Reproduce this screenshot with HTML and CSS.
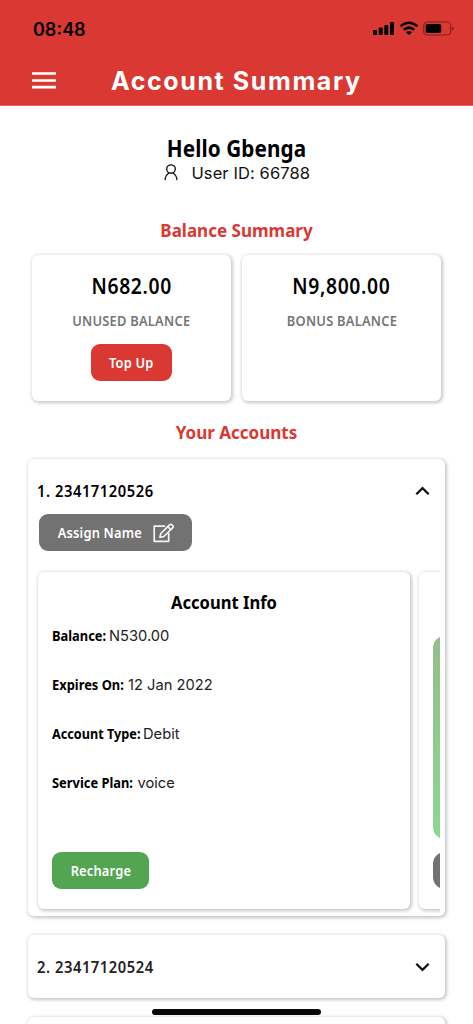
FILE: index.html
```html
<!DOCTYPE html>
<html lang="en">
<head>
<meta charset="utf-8">
<meta name="viewport" content="width=device-width, initial-scale=1">
<title>Account Summary</title>
<link rel="stylesheet" href="styles.css">
</head>
<body>
<div class="screen">
  <header class="header">
    <div class="status">
      <span class="time">08:48</span>
      <svg class="status-icons" width="82" height="16" viewBox="0 0 82 16">
        <rect x="0" y="9" width="4" height="5" rx="1"/>
        <rect x="5.7" y="6.6" width="4" height="7.4" rx="1"/>
        <rect x="11.3" y="4" width="4" height="10" rx="1"/>
        <rect x="17" y="1" width="4" height="13" rx="1"/>
        <g fill="none" stroke="#000" stroke-width="2.5">
          <path d="M27.5 5.2Q36 -1.8 44.5 5.2"/>
          <path d="M30.8 8.8Q36 4.4 41.2 8.8"/>
        </g>
        <path d="M33 11.2Q36 8.9 39 11.2L36 14Z"/>
        <rect x="50.7" y="1" width="27" height="13" rx="3.8" fill="none" stroke="#000" stroke-opacity=".4" stroke-width="1.2"/>
        <rect x="52.7" y="3" width="15.5" height="9" rx="1.7"/>
        <path d="M79.2 5.4Q80.8 6 80.8 7.5Q80.8 9 79.2 9.6Z" fill-opacity=".45"/>
      </svg>
    </div>
    <div class="title-row">
      <svg width="24" height="17" viewBox="0 0 24 17" fill="#fff"><path d="M0 .2H24V2.8H0ZM0 7.2H24V9.8H0ZM0 13.8H24V16.4H0Z"/></svg>
      <h1 class="title">Account Summary</h1>
    </div>
  </header>

  <main class="main">
    <h2 class="hello narrow">Hello Gbenga</h2>
    <div class="user">
      <svg width="14" height="18" viewBox="0 0 14 18" fill="none" stroke="#111" stroke-width="1.35" stroke-linecap="round" stroke-linejoin="round">
        <ellipse cx="7" cy="5" rx="4.3" ry="4.2"/>
        <path d="M1.2 15.6V14.3Q1.5 11.6 4.8 9M9.2 9Q12.5 11.6 12.8 14.3V15.6"/>
      </svg>
      <span class="user-id">User ID: 66788</span>
    </div>

    <h3 class="section narrow balance-title">Balance Summary</h3>
    <div class="balances">
      <div class="card balance">
        <div class="amount narrow">N682.00</div>
        <div class="caption narrow">UNUSED BALANCE</div>
        <div class="button topup"><span class="narrow">Top Up</span></div>
      </div>
      <div class="card balance">
        <div class="amount narrow">N9,800.00</div>
        <div class="caption narrow">BONUS BALANCE</div>
      </div>
    </div>

    <h3 class="section narrow accounts-title">Your Accounts</h3>
    <div class="accounts">
      <section class="card account open">
        <div class="account-head">
          <span class="number narrow">1. 23417120526</span>
          <svg width="16" height="10" viewBox="0 0 16 10" fill="none" stroke="#111" stroke-width="2.2"><path d="M2.3 8.2L8.5 2.1L14.7 8.2"/></svg>
        </div>
        <div class="button assign">
          <span class="narrow">Assign Name</span>
          <svg width="22" height="20" viewBox="0 0 22 20" fill="none" stroke="#f4f4f4" stroke-width="1.7" stroke-linejoin="round" stroke-linecap="round">
            <path d="M11.5 3.2H1.2V18.3H15.7V10.7"/>
            <path d="M7 14.4L7.8 10.5L16.5 1.9Q17.7 .9 19 1.9L19.7 2.6Q20.7 3.7 19.6 4.9L10.8 13.5ZM14.7 3.7L17.8 6.7"/>
          </svg>
        </div>
        <div class="carousel">
          <div class="card info">
            <h4 class="info-title narrow">Account Info</h4>
            <div class="row"><b class="narrow balance-label">Balance:</b><span>N530.00</span></div>
            <div class="row"><b class="narrow expiry-label">Expires On:</b><span>12 Jan 2022</span></div>
            <div class="row"><b class="narrow type-label">Account Type:</b><span>Debit</span></div>
            <div class="row"><b class="narrow plan-label">Service Plan:</b><span>voice</span></div>
            <div class="button recharge"><span class="narrow">Recharge</span></div>
          </div>
          <div class="card next">
            <div class="green-panel"></div>
            <div class="gray-panel"></div>
          </div>
        </div>
      </section>
      <section class="card account closed">
        <div class="account-head">
          <span class="number narrow second">2. 23417120524</span>
          <svg width="16" height="10" viewBox="0 0 16 10" fill="none" stroke="#111" stroke-width="2.2"><path d="M2.3 1.8L8.5 7.9L14.7 1.8"/></svg>
        </div>
      </section>
      <section class="card account closed"></section>
    </div>
  </main>
  <div class="home-bar"></div>
</div>
</body>
</html>
```
FILE: styles.css
```css
* { box-sizing: border-box; }
body { margin: 0; background: #fff; color: #000; font-family: "Noto Sans", "Open Sans", sans-serif; }
h1, h2, h3, h4 { margin: 0; }
svg { display: block; flex: none; }
.screen { position: relative; width: 473px; height: 1024px; overflow: hidden; }
.narrow { transform: scaleX(.92); }

.header { height: 106px; background: #da3832; border-bottom: 1px solid #e3635e; font-family: Inter, sans-serif; }
.status { height: 56px; padding: 2px 18px 0 33px; display: flex; align-items: center; justify-content: space-between; }
.time { font-size: 18px; font-weight: 600; }
.title-row { display: flex; align-items: center; height: 48px; padding-left: 32px; }
.title { margin-left: 55px; padding-top: 1px; color: #fff; font-size: 25px; line-height: 30px; font-weight: 700; letter-spacing: 1.6px; white-space: nowrap; }

.hello { padding-top: 27px; text-align: center; font-size: 22.5px; line-height: 31px; font-weight: 700; letter-spacing: .1px; white-space: nowrap; }
.user { height: 18px; display: flex; justify-content: center; align-items: center; gap: 13.5px; padding-left: 1px; font: 400 16.5px/18px Inter, sans-serif; letter-spacing: .1px; color: #111; }
.section { text-align: center; color: #da3832; font-size: 18.5px; line-height: 26px; font-weight: 700; letter-spacing: 0; }
.balance-title { margin-top: 35px; }
.accounts-title { margin-top: 18px; }

.card { background: #fff; border-radius: 6px; box-shadow: 1px 1px 3.5px 1px rgba(0, 0, 0, .22); }
.balances { display: flex; gap: 11px; padding: 12px 32px 0; }
.balance { width: 199px; height: 146px; display: flex; flex-direction: column; align-items: center; padding-top: 16px; }
.amount { font-size: 21px; line-height: 30px; font-weight: 600; letter-spacing: .7px; }
.caption { margin-top: 10px; font-size: 14px; line-height: 20px; font-weight: 600; letter-spacing: .25px; color: #767676; white-space: nowrap; }
.button { height: 37px; border-radius: 9px; color: #fff; display: flex; align-items: center; justify-content: center; font-size: 14px; font-weight: 600; letter-spacing: .2px; white-space: nowrap; }
.topup { width: 81px; margin-top: 13px; background: #da3832; }

.accounts { display: grid; gap: 19px; padding: 14px 28px 0; }
.account-head { display: flex; align-items: center; justify-content: space-between; height: 63px; padding: 0 15px 0 9px; }
.number { font-size: 16px; font-weight: 600; letter-spacing: .6px; white-space: nowrap; transform-origin: left; }
.second { color: #222; }
.open { width: 417px; height: 457px; }
.open .account-head { height: 55px; padding-top: 8px; }
.assign { width: 153px; margin-left: 11px; padding-right: 2px; background: #727272; gap: 8px; }
.carousel { width: 407px; height: 350px; margin-left: 5px; margin-top: 15px; padding: 6px 0 0 5px; display: flex; gap: 9px; overflow: hidden; }
.info, .next { flex: none; height: 337px; width: 372px; }
.info { padding: 17px 14px; }
.info-title { text-align: center; font-size: 18px; line-height: 27px; font-weight: 700; }
.row { display: flex; height: 49px; font-size: 14px; line-height: 20px; white-space: nowrap; padding-top: 9.5px; align-items: baseline; }
.row b { flex: none; font-weight: 700; transform-origin: left; }
.balance-label { width: 57px; }
.expiry-label { width: 76px; }
.type-label { width: 91px; transform: scaleX(.905); }
.plan-label { width: 85.5px; }
.row span { font-family: Inter, sans-serif; font-size: 14.7px; color: #222; }
.recharge { width: 97px; margin-top: 40px; background: #53a551; }
.recharge .narrow, .topup .narrow { transform: scaleX(.92); }
.next { padding: 64px 14px 0; }
.green-panel { height: 203px; border-radius: 12px; background: linear-gradient(#95bd8b, #8bd793); }
.gray-panel { width: 110px; height: 37px; margin-top: 13px; border-radius: 12px; background: #727272; }
.closed { width: 417px; height: 63px; }
.home-bar { position: absolute; left: 152px; bottom: 9px; width: 169px; height: 6px; border-radius: 3px; background: #080808; }
```
